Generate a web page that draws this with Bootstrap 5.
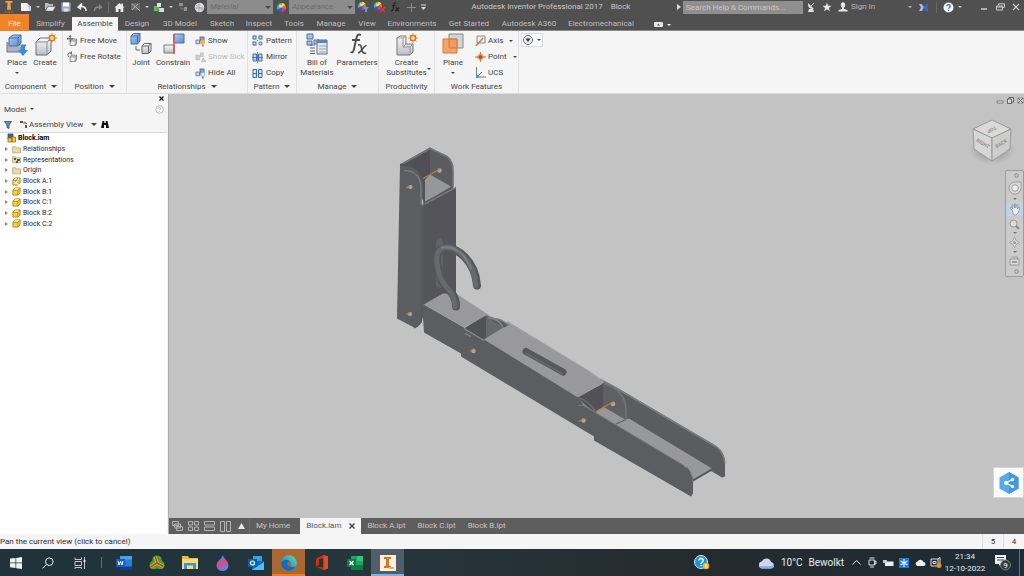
<!DOCTYPE html>
<html lang="en">
<head>
<meta charset="utf-8">
<meta name="viewport" content="width=device-width, initial-scale=1">
<title>Autodesk Inventor Professional 2017 - Block</title>
<link rel="stylesheet" href="https://cdn.jsdelivr.net/npm/bootstrap@5.3.0/dist/css/bootstrap.min.css">
<style>
  body { font: 8px/10px Roboto, "Open Sans", sans-serif; color: #444; background: #f5f5f5; }
  svg { display: block; flex: none; }
  .btn { --bs-btn-padding-x: 0; --bs-btn-padding-y: 0; --bs-btn-font-size: 8px; --bs-btn-line-height: 10px; --bs-btn-border-width: 0; --bs-btn-border-radius: 0; --bs-btn-color: inherit; white-space: nowrap; }
  .caret { display: inline-block; flex: none; border: 2px solid transparent; border-top: 2px solid currentColor; border-bottom: 0; }
  .caret-lg { border-width: 3px; border-top-width: 3px; border-bottom: 0; }
  .vline { width: 1px; height: 11px; background: #6b6b6b; }

  .titlebar { height: 14px; background: #505050; color: #c9c9c9; }
  .qa { width: 16px; height: 14px; display: flex; align-items: center; justify-content: center; flex: none; }
  .qa-narrow { width: 8px; }
  .qa-logo { width: 18px; }
  .qa-sep { width: 5px; }
  .combo { width: 66px; height: 14px; }
  .combo select { appearance: none; border: 0; width: 100%; height: 14px; padding: 0 3px; background: #8c8c8c; color: #6c6c6c; font-style: italic; line-height: 14px; opacity: 1; display: block; }
  .combo .caret { position: absolute; right: 2px; top: 6px; color: #4b4b4b; }
  .search { width: 120px; height: 13px; border: 0; padding: 0 3px; background: #8f8f8f; color: #ddd; }
  .search::placeholder { color: #c8c8c8; opacity: 1; }
  .signin { width: 65px; color: #b8b8b8; }

  .menu-tabs { display: grid; grid-template-columns: 29px 43px 46px 38px 48px 36px 38px 32px 42px 30px 60px 54px 66px 78px 31px; height: 17px; background: #505050; border-bottom: 1px solid #8a8a8a; }
  .menu-tabs .nav-link { padding: 3px 0 0; text-align: center; color: #bebebe; line-height: 14px; white-space: nowrap; }
  .menu-tabs .file { background: #f08227; color: #fff3e4; }
  .menu-tabs .active { background: #f5f5f5; color: #444; margin-top: 3px; padding: 0; }

  .ribbon { height: 63px; border-bottom: 1px solid #dcdcdc; }
  .panel { border-right: 1px solid #e2e2e2; display: flex; flex-direction: column; justify-content: space-between; flex: none; }
  .panel-body { display: flex; padding-top: 1px; }
  .panel-title { text-align: center; height: 12px; line-height: 12px; }
  .panel-title .caret { margin-left: 3px; vertical-align: 1px; }
  .big { display: flex; flex-direction: column; align-items: center; flex: none; }
  .big svg { width: 26px; height: 26px; }
  .rows { display: grid; grid-template-rows: 17px 16px 16px; justify-items: start; }
  .rows .btn { display: flex; align-items: center; gap: 2px; }
  .btn.faded { opacity: 1; color: #bcbcbc; }
  .w63 { width: 63px; } .w64 { width: 64px; } .w121 { width: 121px; } .w49 { width: 49px; } .w82 { width: 82px; } .w56 { width: 56px; } .w84 { width: 84px; }
  .big-28 { width: 28px; } .big-36 { width: 36px; } .big-40 { width: 40px; }
  .round-tool { width: 22px; height: 14px; margin: 2px; background: #fbfbfb; border: 1px solid #dadada; gap: 4px; }

  .browser { width: 169px; background: #f5f5f5; border-right: 1px solid #adadad; }
  .browser-head { height: 38px; }
  .browser-head .head-row { height: 13px; padding: 0 4px; }
  .browser-head .tools { margin-top: 2px; }
  .browser-head .close-row { height: 9px; }
  .tree-box { background: #fff; border-top: 1px solid #d8d8d8; font-size: 7px; color: #26263a; margin-right: 1px; }
  .tree { height: 96px; }
  .tree li { flex: 1 1 0; min-height: 0; display: flex; align-items: center; gap: 2px; padding-left: 5px; }
  .tree .root { padding-left: 7px; }
  .twist { width: 5px; }
  .twist::before { content: ""; display: block; width: 0; border: 2px solid transparent; border-left: 3px solid #8b8b8b; border-right: 0; }

  .canvas { background: #c3c3c3; min-height: 0; }
  .win-ctl { position: absolute; top: 3px; right: 0; gap: 3px; }
  .cube { position: absolute; top: 22px; right: 8px; }
  .navbar-3d { position: absolute; top: 76px; right: 0; width: 19px; height: 107px; background: #cbcbcb; border: 1px solid #9c9c9c; border-radius: 2px; padding: 2px 0; color: #777; }
  .navbar-3d .btn { width: 100%; display: flex; justify-content: center; }
  .navbar-3d .on { background: #bdd2e2; }
  .share { position: absolute; right: 0; bottom: 20px; width: 31px; height: 31px; background: #fbfbfb; border: 1px solid #d6d6d6; }
  .doc-tabs { height: 16px; background: #5e5e5e; color: #c6c6c6; }
  .doc-tabs .nav-link { padding: 0 6px; line-height: 16px; color: #c6c6c6; white-space: nowrap; }
  .doc-tabs .active { background: #f5f5f5; color: #555; }
  .status { height: 15px; color: #2c2c2c; }
  .status .cell { width: 21px; border-left: 1px solid #dedede; line-height: 15px; }

  .taskbar { height: 27px; background: linear-gradient(90deg, #20323a 0%, #25363d 38%, #252b2d 68%, #1d2c36 100%); color: #e9edef; }
  .task { width: 33px; height: 27px; display: flex; align-items: center; justify-content: center; flex: none; }
  .task-sys { width: 32px; }
  .task-sep { width: 11px; }
  .task.hot { background: #ab6731; box-shadow: inset 0 -2px #f47a12; }
  .task.live { background: #4f5e67; box-shadow: inset 0 -2px #78b4e2; }
  .tray { width: 16px; display: flex; justify-content: center; }
  .weather { font-size: 10px; line-height: 14px; width: 90px; gap: 6px; }
  .clock { width: 42px; line-height: 12px; text-align: center; }
</style>
</head>
<body class="vh-100 d-flex flex-column overflow-hidden">

<svg width="0" height="0" class="position-absolute" aria-hidden="true">
  <defs>
    <linearGradient id="steel" x1="0" y1="0" x2="0" y2="1"><stop offset="0" stop-color="#fafafa"/><stop offset="1" stop-color="#b9bfc8"/></linearGradient>
    <linearGradient id="blue" x1="0" y1="0" x2="1" y2="1"><stop offset="0" stop-color="#b4cdf0"/><stop offset="1" stop-color="#5b8bd0"/></linearGradient>
    <linearGradient id="edgeg" x1="0" y1="1" x2="1" y2="0"><stop offset="0" stop-color="#1263b8"/><stop offset=".5" stop-color="#2ba7dc"/><stop offset="1" stop-color="#6bdc7a"/></linearGradient>
    <linearGradient id="drop" x1="0" y1="0" x2=".4" y2="1"><stop offset="0" stop-color="#2bc4f0"/><stop offset=".35" stop-color="#6f74dc"/><stop offset=".6" stop-color="#f0407c"/><stop offset="1" stop-color="#4a8cf0"/></linearGradient>
    <radialGradient id="shade"><stop offset="0" stop-color="#8e8e8e"/><stop offset="1" stop-color="#c3c3c3"/></radialGradient>
    <symbol id="part" viewBox="0 0 10 10"><path d="M1 3.500 3.500 1H9v5.500L6.500 9H1z" fill="#ffd23a" stroke="#a8751a" stroke-width=".9"/><path d="M1.300 3.700h5.200V9M6.500 3.700 9 1.200" fill="none" stroke="#a8751a" stroke-width=".8"/><path d="M2 3 3.800 1.500h4L6.300 3z" fill="#fff0a8"/></symbol>
    <symbol id="folder" viewBox="0 0 10 10"><path d="M.7 8.700V2h3l1 1.200h4.800v5.500z" fill="#ecd9a8" stroke="#b39a62" stroke-width=".8"/></symbol>
    <symbol id="smallcube" viewBox="0 0 12 12"><path d="M3.500 5.500 5.500 4h5v5L9 11H3.500z" fill="#eee" stroke="#666" stroke-width=".8"/><path d="M3.500 5.800H9V11M9 5.800l1.500-1.600" fill="none" stroke="#666" stroke-width=".7"/></symbol>
    <symbol id="rel" viewBox="0 0 12 12"><path d="M1 5h4v4H1z" fill="#cbd9f0" stroke="#4270b8" stroke-width=".8"/><path d="M6 1.500h4v4H6z" fill="#7ca3dc" stroke="#4270b8" stroke-width=".8"/><path d="M5.500 1v8" stroke="#d84040"/></symbol>
    <symbol id="wheel" viewBox="0 0 12 12"><g><path d="M6 6V1a5 5 0 0 1 4.300 2.500z" fill="#ffd23a"/><path d="M6 6l4.300-2.500a5 5 0 0 1 0 5z" fill="#f0692a"/><path d="M6 6l4.300 2.500A5 5 0 0 1 6 11z" fill="#d832a0"/><path d="M6 6v5a5 5 0 0 1-4.300-2.500z" fill="#3c50e0"/><path d="M6 6 1.700 8.500a5 5 0 0 1 0-5z" fill="#2cb5d8"/><path d="M6 6 1.700 3.500A5 5 0 0 1 6 1z" fill="#58c83c"/><circle cx="5" cy="4.500" r="1.800" fill="#fff" opacity=".6"/></g></symbol>
  </defs>
</svg>

<header>
  <div class="titlebar d-flex align-items-center">
    <span class="qa qa-logo"><svg width="12" height="14" viewBox="0 0 12 14"><path d="M2.500 1h7v1.800H7.400l.6 7H4l.6-7H2.500z" fill="#f0a04a"/><path d="M2 11h2v2H2zM5 11h2v2H5zM8 11h2v2H8z" fill="#8f6034"/></svg></span>
    <button class="btn qa" aria-label="New"><svg width="12" height="10"><path d="M1 1h6l3 3v5H1z" fill="#f2f2f2"/><path d="M7 1v3h4v5H9" fill="#c8ced6"/></svg></button>
    <button class="btn qa qa-narrow" aria-label="New options"><i class="caret"></i></button>
    <button class="btn qa" aria-label="Open"><svg width="12" height="10"><path d="M1 8V1h3l1 1h4v2H4z" fill="#b7bcc2"/><path d="M1.500 9 4 4.500h7.500L9 9z" fill="#e5e8ea" stroke="#626a70" stroke-width=".5"/></svg></button>
    <button class="btn qa" aria-label="Save"><svg width="10" height="10"><path d="M.5.500h9v9h-9z" fill="#9aaabd"/><path d="M2 .5h6v4H2z" fill="#fff"/><path d="M2.500 6.500h5v3h-5z" fill="#dce4ec"/></svg></button>
    <button class="btn qa" aria-label="Undo"><svg width="10" height="9"><path d="M1 4.500 4.500 1v2.500C8 3.500 9 5 9 8" fill="none" stroke="#f2f2f2" stroke-width="1.500"/><path d="M0 4.200 4 .5V7z" fill="#f2f2f2"/></svg></button>
    <button class="btn qa" aria-label="Redo"><svg width="10" height="9"><path d="M6 4C2.500 4 1.500 5.500 1.500 8" fill="none" stroke="#8a8a8a" stroke-width="1.300"/><path d="M9.500 4.200 6 1v6z" fill="#8a8a8a"/></svg></button>
    <span class="qa qa-sep"><i class="vline"></i></span>
    <button class="btn qa" aria-label="Home"><svg width="11" height="11"><path d="M.5 5.500 5.500 1l2 1.700V1.500H9V4l1.500 1.500H9.300V10H6.500V7h-2v3H1.700V5.500z" fill="#ececec"/></svg></button>
    <button class="btn qa" aria-label="Select"><svg width="11" height="10"><path d="M1 1h9v7H1z" fill="#6c6c6c"/><path d="M2 2l6 5M8 2 2 8M5 4l5 5" stroke="#a8a8a8"/></svg></button>
    <button class="btn qa qa-narrow" aria-label="Select options"><i class="caret"></i></button>
    <button class="btn qa" aria-label="Update"><svg width="12" height="11"><path d="M1 4h5v5H1z" fill="#79b35d"/><path d="M4 1h4v4H4z" fill="#dfe7ef"/><path d="M6 6h5v4H6z" fill="#d3dbe6"/><path d="M3 5l3 4" stroke="#3bb83b" stroke-width="2"/></svg></button>
    <button class="btn qa qa-narrow" aria-label="Update options"><i class="caret"></i></button>
    <button class="btn qa" aria-label="Links"><svg width="12" height="10"><path d="M2 1h4v3H2zM7 5h3v4H7z" fill="#8f8f8f"/><path d="M4 4v3h3" fill="none" stroke="#777"/></svg></button>
    <button class="btn qa" aria-label="Material browser"><svg width="11" height="11"><circle cx="5.500" cy="5.500" r="4.800" fill="#d9dadb"/><path d="M5 1v9M1 6h9M2 3l7 5" stroke="#a4a8ac"/></svg></button>
    <div class="combo position-relative"><select disabled aria-label="Material"><option>Material</option></select><i class="caret caret-lg"></i></div>
    <button class="btn qa" aria-label="Appearance browser"><svg width="11" height="11"><use href="#wheel"/></svg></button>
    <div class="combo position-relative"><select disabled aria-label="Appearance"><option>Appearance</option></select><i class="caret caret-lg"></i></div>
    <button class="btn qa" aria-label="Adjust"><svg width="13" height="12"><use href="#wheel" width="10" height="10"/><path d="M6 6h6L10 8.500V11H8V8.500z" fill="#4aa6e6"/></svg></button>
    <button class="btn qa" aria-label="Clear"><svg width="13" height="12"><use href="#wheel" width="10" height="10"/><path d="m7 6 5 5m0-5-5 5" stroke="#e0362c" stroke-width="1.500"/></svg></button>
    <button class="btn qa" aria-label="Parameters"><svg width="10" height="10"><path d="M6 1C4.500.5 4 1.500 3.700 3L3 7c-.3 1.500-.8 2-2 1.700M2 3.500h3.500M5.500 5.500c2 0 1.500 3.500 3.500 3.500M9 5.500 5.500 9" fill="none" stroke="#222" stroke-width="1.200"/></svg></button>
    <button class="btn qa" aria-label="Add"><svg width="9" height="9"><path d="M4.500 0v9M0 4.500h9" stroke="#8c8c8c"/></svg></button>
    <button class="btn qa qa-narrow" aria-label="Customize"><svg width="7" height="7"><path d="M1 1h5" stroke="#ddd"/><path d="M1 3h5L3.500 6z" fill="#ddd"/></svg></button>
    <div class="flex-grow-1 d-flex justify-content-center gap-2 text-nowrap"><span>Autodesk Inventor Professional 2017</span><span>Block</span></div>
    <span class="qa qa-narrow"><svg width="4" height="6"><path d="M0 0v6l4-3z" fill="#ddd"/></svg></span>
    <input class="search" type="search" placeholder="Search Help &amp; Commands..." aria-label="Search Help and Commands">
    <button class="btn qa" aria-label="Exchange"><svg width="9" height="10"><path d="M1 2c0 4 2 5 6 5L1 1zM2 7h4l1 3H1z" fill="#e2e2e2"/><path d="m4 4 3-3" stroke="#e2e2e2"/></svg></button>
    <button class="btn qa" aria-label="Favorites"><svg width="10" height="10"><path d="M5 .5 6.200 3.800h3.300L6.900 5.900l1 3.400L5 7.300 2.100 9.300l1-3.400L.5 3.800h3.300z" fill="#e6e6e6"/></svg></button>
    <button class="btn qa" aria-label="Account"><svg width="10" height="10"><ellipse cx="5" cy="3" rx="2.200" ry="2.800" fill="#e6e6e6"/><path d="M4 5h2v2l3.500 1v1.500h-9V8L4 7z" fill="#e6e6e6"/></svg></button>
    <button class="btn signin d-flex align-items-center justify-content-between"><span>Sign In</span><i class="caret me-1"></i></button>
    <button class="btn qa" aria-label="Autodesk Exchange"><svg width="10" height="9"><path d="M0 1h2.500L5 4 3 8H0l2-3.500z" fill="#aebfe6"/><path d="M9.500 1H7.500L4.500 4.500 7 8h2.500L8 4.500z" fill="#4565d4"/></svg></button>
    <span class="qa qa-narrow"><i class="vline"></i></span>
    <button class="btn qa" aria-label="Help"><svg width="11" height="11"><circle cx="5.500" cy="5.500" r="5" fill="#f3f5fa"/><path d="M3.800 4.300c0-2.200 3.500-2.100 3.500 0 0 1.200-1.700 1.200-1.700 2.500M5.500 7.800v1.200" fill="none" stroke="#3c66c4" stroke-width="1.300"/></svg></button>
    <button class="btn qa qa-narrow" aria-label="Help options"><i class="caret"></i></button>
    <div class="d-flex ms-2 ps-1">
      <button class="btn qa" aria-label="Minimize"><svg width="8" height="8"><path d="M1 6h6" stroke="#ccc" stroke-width="1.500"/></svg></button>
      <button class="btn qa" aria-label="Restore"><svg width="9" height="8"><path d="M2.500 2V.8h6v3.500H7M.5 3h6v4h-6zM.5 4h6" fill="none" stroke="#ccc"/></svg></button>
      <button class="btn qa" aria-label="Close"><svg width="8" height="8"><path d="m1 1 6 6m0-6L1 7" stroke="#ccc" stroke-width="1.200"/></svg></button>
    </div>
  </div>

  <nav class="menu-tabs">
    <a href="#" class="nav-link file">File</a><a href="#" class="nav-link">Simplify</a><a href="#" class="nav-link active">Assemble</a><a href="#" class="nav-link">Design</a><a href="#" class="nav-link">3D Model</a><a href="#" class="nav-link">Sketch</a><a href="#" class="nav-link">Inspect</a><a href="#" class="nav-link">Tools</a><a href="#" class="nav-link">Manage</a><a href="#" class="nav-link">View</a><a href="#" class="nav-link">Environments</a><a href="#" class="nav-link">Get Started</a><a href="#" class="nav-link">Autodesk A360</a><a href="#" class="nav-link">Electromechanical</a>
    <button class="btn d-flex align-items-center justify-content-end gap-1 pt-1 text-white" aria-label="Ribbon display"><svg width="9" height="5"><rect width="9" height="5" rx="1" fill="#e8e8e8"/><path d="M3 3.500 4.500 1.500 6 3.500z" fill="#505050"/></svg><i class="caret"></i></button>
  </nav>

  <div class="ribbon d-flex">
    <section class="panel w63">
      <div class="panel-body justify-content-center">
        <button class="btn big big-28"><svg viewBox="0 0 26 26"><path d="M3 18 8 13h14l-4 6H4z" fill="#c9cfd7" stroke="#777f8a"/><path d="M3 10v10h14V15" fill="#aab3bf" stroke="#6d7682"/><path d="m5 6 4-3h8v8l-3 3H5z" fill="url(#blue)" stroke="#4a70a8"/><path d="M5 6h9v8M14 6l3-3" fill="none" stroke="#4a70a8"/><path d="M17 13h4v5h3l-5 6-5-6h3z" fill="#2e8fe8"/></svg><span>Place</span><i class="caret mt-1"></i></button>
        <button class="btn big big-28"><svg viewBox="0 0 26 26"><path d="m4 10 4-4h11v13l-4 4H4z" fill="url(#steel)" stroke="#6b6f75"/><path d="M4 10h11v13M15 10l4-4" fill="none" stroke="#8b8f95"/><path d="M20 1v10M15 6h10M16.500 2.500l7 7M23.500 2.500l-7 7" stroke="#e89050"/><circle cx="20" cy="6" r="2.600" fill="#ffe58a" stroke="#e27020" stroke-width="1.400"/></svg><span>Create</span></button>
      </div>
      <div class="panel-title">Component <i class="caret caret-lg"></i></div>
    </section>
    <section class="panel w64">
      <div class="panel-body rows ps-1">
        <button class="btn"><svg width="11" height="12" viewBox="0 0 12 12"><use href="#smallcube"/><path d="M3.500 0v7M0 3.500h7M2.500 1.300 3.500 0l1 1.300M1.300 2.500 0 3.500l1.300 1" fill="none" stroke="#333" stroke-width=".8"/></svg>Free Move</button>
        <button class="btn"><svg width="11" height="12" viewBox="0 0 12 12"><use href="#smallcube"/><path d="M2 6C-.5 3 2 .5 5 1.500M5 0v3L3 2" fill="none" stroke="#444" stroke-width=".8"/></svg>Free Rotate</button>
      </div>
      <div class="panel-title">Position <i class="caret caret-lg"></i></div>
    </section>
    <section class="panel w121">
      <div class="panel-body">
        <button class="btn big big-28"><svg viewBox="0 0 26 26"><path d="m3 4 2.500-2.500H12V9L9.500 12H3z" fill="url(#blue)" stroke="#4a70a8"/><path d="M3 4h6.500v8M9.500 4 12 1.500" fill="none" stroke="#4a70a8"/><path d="m14 14 2.500-2.500H23V19l-2.500 2.500H14z" fill="url(#steel)" stroke="#666"/><path d="M14 14h6.500v7.500M20.500 14l2.500-2.500M8 14v4h4" fill="none" stroke="#666"/></svg><span>Joint</span></button>
        <button class="btn big big-36"><svg viewBox="0 0 26 26"><path d="M14 2h10v9H14z" fill="url(#blue)" stroke="#4a70a8"/><path d="M4 13h10v8H4z" fill="url(#steel)" stroke="#777"/><path d="M14 2v20" stroke="#e04848" stroke-width="1.500"/></svg><span>Constrain</span></button>
        <div class="rows ps-1">
          <button class="btn"><svg width="11" height="12" viewBox="0 0 12 12"><use href="#rel"/><circle cx="8.500" cy="7.500" r="2.500" fill="#ffb636"/><path d="M7.500 10h2v2h-2z" fill="#7a88a0"/></svg>Show</button>
          <button class="btn faded" disabled><svg width="11" height="12" viewBox="0 0 12 12"><path d="M1 4h4v5H1zM6 1.500h3v4H6zM7 11l2-4 3 4z" fill="#d0d0d0" stroke="#b4b4b4" stroke-width=".7"/></svg>Show Sick</button>
          <button class="btn"><svg width="11" height="12" viewBox="0 0 12 12"><use href="#rel"/><circle cx="8.500" cy="7.500" r="2.300" fill="#dcecff" stroke="#67a2d8" stroke-width=".7"/><path d="M7.500 10h2v2h-2z" fill="#5a88c0"/></svg>Hide All</button>
        </div>
      </div>
      <div class="panel-title">Relationships <i class="caret caret-lg"></i></div>
    </section>
    <section class="panel w49">
      <div class="panel-body rows ps-1">
        <button class="btn"><svg width="12" height="11"><g fill="#d6e4f8" stroke="#3c68b0"><rect x="1" y="1" width="3" height="3"/><rect x="7" y="1" width="3" height="3"/><rect x="1" y="7" width="3" height="3"/><rect x="7" y="7" width="3" height="3" rx="1"/></g><path d="M5 5.500h1" stroke="#3c68b0"/></svg>Pattern</button>
        <button class="btn"><svg width="12" height="11"><path d="M1 2h3.500v7H1zM6.500 2H10v7H6.500z" fill="#b9cff0" stroke="#4a70a8"/><path d="M5.500 0v11M0 5.500h11" stroke="#405880" stroke-width=".7"/></svg>Mirror</button>
        <button class="btn"><svg width="12" height="11"><path d="M1 1.500h3.500v8H1zM6.500 1.500H10v8H6.500zM1 5.500h3.500M6.500 5.500H10" fill="#d6e4f8" stroke="#3c68b0"/></svg>Copy</button>
      </div>
      <div class="panel-title">Pattern <i class="caret caret-lg"></i></div>
    </section>
    <section class="panel w82">
      <div class="panel-body">
        <button class="btn big big-40"><svg viewBox="0 0 26 26"><path d="M3 2h6v5H3zM10 8h5v4h-5zM3 9h5v4H3z" fill="#a9c2e8" stroke="#4a70a8"/><path d="M13 8h10v14H13z" fill="#e6ebf2" stroke="#5a6d8c"/><path d="M13 8h10v3H13z" fill="#5e82ba"/><path d="M15 14h7M15 17h7M15 20h7" stroke="#8f9db4"/><path d="M6 13h5M6 16h5M6 19h5M6 21.500h5" stroke="#5c6470"/></svg><span>Bill of<br>Materials</span></button>
        <button class="btn big big-40"><svg viewBox="0 0 26 26"><path d="M17 3c-3-1.500-4 0-4.800 4L10 17c-.6 3-1.500 4-3.500 3M8 8h8" fill="none" stroke="#4c4c4c" stroke-width="1.900"/><path d="M14 13c3-1 3 1 3.700 4s1.300 5 4.300 4M22.500 13.500c-3 0-5 7-8.500 7.500" fill="none" stroke="#4c4c4c" stroke-width="1.600"/></svg><span>Parameters</span></button>
      </div>
      <div class="panel-title">Manage <i class="caret caret-lg"></i></div>
    </section>
    <section class="panel w56">
      <div class="panel-body justify-content-center ps-1">
        <button class="btn big big-40"><svg viewBox="0 0 26 26"><path d="m3 6 3-2h6v8h7v8l-3 3H3z" fill="url(#steel)" stroke="#777"/><path d="M3 6h6v9h7v8M9 6l3-2M9 15l3-3M16 15l3-3" fill="none" stroke="#999"/><path d="M19 1v10M14 6h10M15.500 2.500l7 7M22.500 2.500l-7 7" stroke="#e89050"/><circle cx="19" cy="6" r="2.600" fill="#ffe58a" stroke="#e27020" stroke-width="1.400"/></svg><span>Create<br>Substitutes</span></button>
        <i class="caret align-self-end mb-2"></i>
      </div>
      <div class="panel-title">Productivity</div>
    </section>
    <section class="panel w84">
      <div class="panel-body">
        <button class="btn big big-36"><svg viewBox="0 0 26 26"><path d="M9 2h14v14H9z" fill="#d0d3d8" stroke="#888"/><path d="M3 7h14v14H3z" fill="#f6a468" stroke="#d8763a"/><path d="M9 7h8v9H9z" fill="#f09a60" stroke="#d8763a"/></svg><span>Plane</span><i class="caret mt-1"></i></button>
        <div class="rows ps-1">
          <button class="btn"><svg width="11" height="12"><path d="M2 1h8v7H2z" fill="#eee" stroke="#888"/><path d="M1 11 8 3" stroke="#d4763c" stroke-width="1.300"/></svg>Axis <i class="caret ms-1"></i></button>
          <button class="btn"><svg width="11" height="12"><path d="M5.500 1.500 10 6l-4.500 4.500L1 6z" fill="#eaa477"/><path d="M5.500 1v10M0 6h11" stroke="#d08050"/><circle cx="5.500" cy="6" r="1.800" fill="#a75428"/></svg>Point <i class="caret ms-1"></i></button>
          <button class="btn"><svg width="11" height="12"><path d="M1.500 0v10H11M2 10l5-5" fill="none" stroke="#777"/><path d="M1 8h3v3H1z" fill="#3f94e0"/></svg>UCS</button>
        </div>
      </div>
      <div class="panel-title">Work Features</div>
    </section>
    <button class="btn round-tool d-flex align-items-center justify-content-center" aria-label="Select filter"><svg width="10" height="10"><circle cx="5" cy="5" r="4.500" fill="#e7eaee" stroke="#6f7680"/><path d="M2.500 3.500h5L5 7z" fill="#333"/></svg><i class="caret"></i></button>
  </div>
</header>

<main class="d-flex flex-grow-1 overflow-hidden">
  <aside class="browser d-flex flex-column flex-shrink-0">
    <div class="browser-head">
      <div class="close-row d-flex justify-content-end align-items-center"><button class="btn me-1" aria-label="Close panel"><svg width="5" height="5"><path d="m.5.500 4 4m0-4-4 4" stroke="#111" stroke-width="1.200"/></svg></button></div>
      <div class="head-row d-flex justify-content-between align-items-center"><button class="btn">Model<i class="caret ms-1 align-middle"></i></button><button class="btn" aria-label="Browser help"><svg width="9" height="9"><circle cx="4.500" cy="4.500" r="3.800" fill="#fafafa" stroke="#aaa" stroke-width=".8"/><path d="M3.300 3.500c0-1.700 2.400-1.600 2.400 0 0 .8-1.200.9-1.200 1.800M4.500 6.200v.8" fill="none" stroke="#aaa" stroke-width=".8"/></svg></button></div>
      <div class="head-row tools d-flex align-items-center">
        <svg width="8" height="8"><path d="M.5.500h7L5 4v3.500L3 6.500V4z" fill="#6690b8" stroke="#2f4b66" stroke-width=".8"/></svg>
        <svg width="9" height="9" class="ms-2"><path d="M0 1h3v2H0zM5 5h2v3H5z" fill="#555"/><path d="M3 3h3M4 2l3 2" stroke="#c84848"/></svg>
        <button class="btn d-flex align-items-center gap-2">Assembly View<i class="caret caret-lg"></i></button>
        <svg width="8" height="7" class="ms-1"><path d="M1.500 0h1.800v2h1.400V0h1.800L8 7H5V4H3v3H0z" fill="#111"/></svg>
      </div>
    </div>
    <div class="tree-box flex-grow-1">
      <ul class="tree list-unstyled d-flex flex-column mb-0">
        <li class="root fw-bold text-black"><svg width="9" height="10"><path d="M1 1h5v5H1z" fill="#3f6a9e" stroke="#1e3a60" stroke-width=".7"/><path d="M1 5h4v4H1zM5 4h3.500v5H5z" fill="#ffc832" stroke="#8b6010" stroke-width=".7"/></svg>Block.iam</li>
        <li><i class="twist"></i><svg width="9" height="9"><use href="#folder"/></svg>Relationships</li>
        <li><i class="twist"></i><svg width="9" height="9"><use href="#folder"/><path d="M2 3h2v2H2zM5 4h3v2H5zM4 6h2v2H4z" fill="#4a5a6a"/></svg>Representations</li>
        <li><i class="twist"></i><svg width="9" height="9"><use href="#folder"/></svg>Origin</li>
        <li><i class="twist"></i><svg width="9" height="9"><use href="#part"/><path d="M2 4 7 8M7 1 3 7" stroke="#f4f4f4" stroke-width="1.300"/><path d="M6 1 3 5" stroke="#666" stroke-width=".8"/></svg>Block A:1</li>
        <li><i class="twist"></i><svg width="9" height="9"><use href="#part"/></svg>Block B:1</li>
        <li><i class="twist"></i><svg width="9" height="9"><use href="#part"/></svg>Block C:1</li>
        <li><i class="twist"></i><svg width="9" height="9"><use href="#part"/></svg>Block B:2</li>
        <li><i class="twist"></i><svg width="9" height="9"><use href="#part"/></svg>Block C:2</li>
      </ul>
    </div>
  </aside>

  <div class="d-flex flex-column flex-grow-1 overflow-hidden">
    <div class="canvas position-relative flex-grow-1">
      <svg class="w-100 h-100" viewBox="169 94 855 423" role="img" aria-label="Hinged block assembly">
        <!-- far wall of the end channel -->
        <path d="M600 378 615 386 717 446Q725 452 725 463V476L722 477 626 420 603 384z" fill="#5b5c60"/>
        <path d="M600 379 615 387 716 446Q724 452 725 463" fill="none" stroke="#7d7e82" stroke-width="1.500"/>
        <!-- channel floor -->
        <path d="M594 412 605 406 625 419 629 418 712 468 693 480 680 466z" fill="#98989c"/>
        <path d="m712 469-19 11" stroke="#505156" stroke-width="2"/>
        <path d="m615 424 11-5" stroke="#55565a"/>
        <!-- second hinge pocket -->
        <path d="M603 383Q626 390 626 408L625 419 603 406z" fill="#5f6064"/>
        <path d="M604 383Q626 390 626 410V418" fill="none" stroke="#737478" stroke-width="1.500"/>
        <path d="M577 397 603 383V407L594 413z" fill="#525157"/>
        <!-- middle block, top face -->
        <path d="M483 339 508 321 588 370 604 382 578 397z" fill="#98989d"/>
        <path d="m507 321 81 49 16 11" fill="none" stroke="#a3a3a7"/>
        <path d="m526 351 37 20.500" stroke="#57585c" stroke-width="7" stroke-linecap="round"/>
        <path d="m526 353 36 20" stroke="#66676b" stroke-width="2" stroke-linecap="round"/>
        <!-- first hinge pocket -->
        <path d="M464 328 486 314 508 324 484 339z" fill="#67686c"/>
        <path d="M464 328 486 315V337L482 339z" fill="#525157"/>
        <path d="M492 318Q500 317 508 325L504 327 492 320z" fill="#5a5b5f"/>
        <path d="M488 317Q498 318 503 326" fill="none" stroke="#85868a" stroke-width="1.500"/>
        <path d="M492 318Q500 317 509 325" fill="none" stroke="#7b7c80" stroke-width="1.500"/>
        <!-- near side of the arm -->
        <path d="M422 303 464 327 484 339 578 397 585 406 682 464Q693 471 693 481V493L691 496 594 440V436L461 356V353L424 332z" fill="#5c5d61"/>
        <path d="m585 406 97 58Q693 471 693 482" fill="none" stroke="#737478"/>
        <path d="M578 397Q590 401 596 412" fill="none" stroke="#66676b" stroke-width="2"/>
        <path d="M578 405Q587 403 594 412" fill="none" stroke="#7c7d81"/>
        <path d="m687 467 3 5" stroke="#55565a"/>
        <path d="m464 328 20 12M465 333l6 3" stroke="#87888c" stroke-width="1.200"/>
        <!-- base block, top face -->
        <path d="M424 304 443 293H456L488 314 464 327z" fill="#98989d"/>
        <!-- upright block -->
        <path d="M400 164 430 147 447 156Q453 161 453 170V188L425 203z" fill="#5b5c60"/>
        <path d="M403 165 430 149V175L422 181z" fill="#504f56"/>
        <path d="M430 174 451 186 425 202V179z" fill="#97979b"/>
        <path d="M401 164 430 148 447 156Q453 161 453 170V187" fill="none" stroke="#747579" stroke-width="1.700"/>
        <path d="M421 205 456 187V294L443 293 424 304H421z" fill="#55545b"/>
        <path d="m422 205 34-18" stroke="#7c7c81" stroke-width="1.400"/>
        <path d="m424 202 29-15" stroke="#55565a"/>
        <path d="M400 164 408 164Q422 169 422 184V322L414 327 397 318z" fill="#5c5d61"/>
        <path d="M404 170Q420 170 421 187V204" fill="none" stroke="#77787c" stroke-width="1.500"/>
        <path d="M400 164Q424 165 424 184V204" fill="none" stroke="#4f5054" stroke-width="1.500"/>
        <path d="M422 206V316Q421 325 414 327" fill="none" stroke="#58595d" stroke-width="2"/>
        <!-- hook -->
        <path d="M436 241Q440 233 443 241V287H436z" fill="#616268"/>
        <g fill="none" stroke-linecap="round">
          <path d="M477 285C475 260 457 246 444 248 432 251 438 267 441 277 444 289 456 290 456 306" stroke="#55565a" stroke-width="8"/>
          <path d="M476 285C474 260 456 245 444 247 433 250 437 266 440 276 444 288 455 290 455 306" stroke="#68696d" stroke-width="5"/>
          <path d="M471 268C464 252 454 245 442 247" stroke="#7d7e82" stroke-width="2"/>
        </g>
        <!-- pins and axes -->
        <g fill="#aaaaad"><circle cx="410.500" cy="186.500" r="2"/><circle cx="410" cy="313.500" r="2"/><circle cx="439.500" cy="170" r="2.200"/><circle cx="473.500" cy="350.500" r="2.200"/><circle cx="583.500" cy="420" r="2.200"/><circle cx="613" cy="403.500" r="2.200"/></g>
        <path d="m423 178 18-10M406 188l4-3M406 314l4-2M470 351l4-3M579 421l5-3M596 411l18-10" stroke="#c97c2e" stroke-width="1.200"/>
      </svg>
      <div class="win-ctl d-flex">
        <button class="btn" aria-label="Minimize view"><svg width="8" height="7"><path d="M1 4h6v2H1z" fill="#eee" stroke="#666" stroke-width=".8"/></svg></button>
        <button class="btn" aria-label="Restore view"><svg width="7" height="7"><path d="M2 2V.5h4.500V5H5M.5 2h4v4.500h-4z" fill="#ddd" stroke="#555" stroke-width=".9"/></svg></button>
        <button class="btn" aria-label="Close view"><svg width="7" height="7"><path d="M1 1h5v5H1z" fill="#eee" stroke="#777" stroke-width=".7"/><path d="m1 1 5 5m0-5L1 6" stroke="#555"/></svg></button>
      </div>
      <svg class="cube" width="48" height="50" viewBox="0 0 48 50"><ellipse cx="24" cy="35" rx="23" ry="13" fill="url(#shade)"/><g stroke="#9a9a9a"><path d="M24 4 43 13 24 22 5 13z" fill="#dadada"/><path d="M5 13 24 22V45L6 33z" fill="#d6d6d6"/><path d="M43 13 24 22V45L42 33z" fill="#cdcdcd"/></g><g font-size="5" font-weight="bold" fill="#909090" text-anchor="middle"><text transform="translate(14 29) rotate(30)">RIGHT</text><text transform="translate(34 29) rotate(-30)">BACK</text><text transform="translate(23 12) rotate(152)">TOP</text></g></svg>
      <div class="navbar-3d d-flex flex-column justify-content-between align-items-center">
        <button class="btn justify-content-end pe-1" aria-label="Close navigation bar"><svg width="5" height="5"><circle cx="2.500" cy="2.500" r="1.800" fill="none" stroke="#888"/></svg></button>
        <button class="btn" aria-label="Wheel"><svg width="14" height="14"><path d="M7 1a6 6 0 1 0 6 6V1z" fill="#ddd" stroke="#999"/><circle cx="7" cy="7" r="3.300" fill="#eee" stroke="#999"/></svg></button>
        <i class="caret"></i>
        <button class="btn on" aria-label="Pan"><svg width="12" height="13"><path d="M3 7 1 5l1-1 2 2-1-4 1-.5L5.500 5V1h1.200v4L8 1.500l1 .3L8.500 6 10 4l1 .8L9 10l-2 2H5z" fill="#eee" stroke="#8594a0" stroke-width=".8"/></svg></button>
        <button class="btn" aria-label="Zoom"><svg width="11" height="11"><circle cx="4.500" cy="4.500" r="3.500" fill="#ddd" stroke="#999"/><path d="m7 7 3 3" stroke="#888" stroke-width="2"/></svg></button>
        <i class="caret"></i>
        <button class="btn" aria-label="Orbit"><svg width="11" height="11"><path d="M5.500 0 7 3.500 10.500 5.500 7 7.500 5.500 11 4 7.500.5 5.500 4 3.500z" fill="#ddd" stroke="#999" stroke-width=".8"/><circle cx="5.500" cy="5.500" r="1.500" fill="#999"/></svg></button>
        <i class="caret"></i>
        <button class="btn" aria-label="Look at"><svg width="11" height="10"><path d="M1 3h9v6H1zM2.500 1h6v2" fill="#ddd" stroke="#999"/><path d="M3 5h5v2H3z" fill="#999"/></svg></button>
        <button class="btn justify-content-end pe-1" aria-label="Customize navigation bar"><svg width="5" height="5"><circle cx="2.500" cy="2.500" r="1.800" fill="none" stroke="#888"/></svg></button>
      </div>
      <button class="btn share d-flex align-items-center justify-content-center" aria-label="Share"><svg width="20" height="22"><path d="M10 0 19.500 5.500v11L10 22 .5 16.500v-11z" fill="#56a8ec"/><path d="M10 0 19.500 5.500v11L10 22z" fill="#4496e0"/><path d="M13.500 7.500 7 11l6.500 3.500" fill="none" stroke="#fff" stroke-width="1.200"/><g fill="#fff"><circle cx="13.500" cy="7.500" r="1.700"/><circle cx="7" cy="11" r="2.100"/><circle cx="13.500" cy="14.500" r="1.700"/></g></svg></button>
    </div>
    <nav class="doc-tabs d-flex flex-shrink-0 align-items-center">
      <button class="btn qa" aria-label="Cascade"><svg width="11" height="10"><path d="M.5.500h6v4h-6zM2.500 3h6v4h-6zM4.500 5.500h6v4h-6z" fill="#5e5e5e" stroke="#b4b4b4"/></svg></button>
      <button class="btn qa" aria-label="Tile"><svg width="11" height="10"><path d="M.5.500h4v3.500h-4zM6.500.500h4v3.500h-4zM.5 6h4v3.500h-4zM6.500 6h4v3.500h-4z" fill="none" stroke="#b4b4b4"/></svg></button>
      <button class="btn qa" aria-label="Tile horizontally"><svg width="11" height="10"><path d="M.5.500h10v3.500H.5zM.5 6h10v3.500H.5z" fill="none" stroke="#b4b4b4"/></svg></button>
      <button class="btn qa" aria-label="Tile vertically"><svg width="11" height="11"><path d="M.5.500h4v10h-4zM6.500.500h4v10h-4z" fill="none" stroke="#b4b4b4"/></svg></button>
      <button class="btn qa" aria-label="Documents"><svg width="7" height="6"><path d="M3.500 0 7 6H0z" fill="#e8e8e8"/></svg></button>
      <i class="vline h-100"></i>
      <a href="#" class="nav-link">My Home</a>
      <a href="#" class="nav-link active d-flex align-items-center ms-1">Block.iam<svg class="ms-2" width="6" height="6"><path d="m.5.500 5 5m0-5-5 5" stroke="#444" stroke-width="1.400"/></svg></a>
      <a href="#" class="nav-link">Block A.ipt</a><a href="#" class="nav-link">Block C.ipt</a><a href="#" class="nav-link">Block B.ipt</a>
    </nav>
  </div>
</main>

<div class="status d-flex flex-shrink-0 align-items-center justify-content-between"><span>Pan the current view (click to cancel)</span><div class="d-flex"><span class="cell text-center">5</span><span class="cell text-center">4</span></div></div>

<footer class="taskbar d-flex align-items-center flex-shrink-0">
  <button class="btn task task-sys" aria-label="Start"><svg width="12" height="12"><path d="M0 1.500 5.500 1v4.600H0zM6.200.9 12 0v5.600H6.200zM0 6.300h5.500V11L0 10.300zM6.200 6.300H12V12l-5.800-.8z" fill="#f2f2f2"/></svg></button>
  <button class="btn task task-sys" aria-label="Search"><svg width="12" height="12"><circle cx="7.300" cy="4.700" r="3.800" fill="none" stroke="#eee"/><path d="M4.500 7.500.7 11.300" stroke="#eee"/></svg></button>
  <button class="btn task task-sys" aria-label="Task view"><svg width="12" height="12"><path d="M1 .5v2h6.500v-2M1 4.500h6.500v4H1zM1 12v-1.500h6.500V12M10.500 0v12" fill="none" stroke="#c4c8ca"/><path d="M9.500 3h2v2h-2z" fill="#ddd"/></svg></button>
  <span class="qa task-sep"><i class="vline"></i></span>
  <button class="btn task" aria-label="Word"><svg width="16" height="14"><path d="M4 0h12v14H4z" fill="#2b7cd3"/><path d="M4 0h12v3.500H4z" fill="#41a5ee"/><path d="M4 10.500h12V14H4z" fill="#103f91"/><path d="M0 3h9v8H0z" fill="#185abd"/><path d="m2 5 1 4L4.500 5.500 6 9l1-4" fill="none" stroke="#fff"/></svg></button>
  <button class="btn task" aria-label="Route planner"><svg width="16" height="16"><path d="M8 .5c4 0 5 3 4.500 5 2 1 3.500 3 3 6-1 3-4 3-7.500 2C4.500 15 1 14.500.5 11c0-2.500 1-4.500 3-5.500C3 3 4.500.5 8 .5z" fill="#4aa12e"/><path d="m8 8-1.500-6M8 8l6.500 3.500M8 8 1.500 12" stroke="#e9c63a" stroke-width="3"/><path d="m8 8-1.500-6M8 8l6.500 3.500M8 8 1.500 12" stroke="#c63b20" stroke-width="1.500"/></svg></button>
  <button class="btn task" aria-label="File Explorer"><svg width="16" height="13"><path d="M0 0h6l1 2h9v11H0z" fill="#f5b93a"/><path d="M0 3h16v10H0z" fill="#ffdc72"/><path d="M2 13V7h12v6h-3V9.500H5V13z" fill="#3c92e0"/></svg></button>
  <button class="btn task" aria-label="Paint 3D"><svg width="13" height="16"><path d="M7 0c1 4 5.500 6 5.500 10.500A6 5.500 0 0 1 .5 10.500C.5 6 6 4 7 0z" fill="url(#drop)"/></svg></button>
  <button class="btn task" aria-label="Outlook"><svg width="16" height="14"><path d="M5 0h9v6H5z" fill="#28a8ea"/><path d="M4 5h12v9H4z" fill="#0f6cbd"/><path d="M4 14 16 6v8z" fill="#50c0f0"/><path d="M0 3h9v8H0z" fill="#0f5fb0"/><circle cx="4.500" cy="7" r="2" fill="none" stroke="#fff" stroke-width="1.200"/></svg></button>
  <button class="btn task hot" aria-label="Edge"><svg width="16" height="16"><circle cx="8" cy="8" r="7.800" fill="url(#edgeg)"/><path d="M.5 9C1 4 8 3.500 9.500 7.500 10 9 8.500 9.500 9 10.500c1 2 4 1.500 5.700.5-1.700 4-6 5.500-9 4.200C2 14 .5 11.500.5 9z" fill="#1668b8"/><path d="M8 6.500c2 0 2.500 1.500 1.500 2.500-.5 1-.3 1.800.7 2.300C8 12 6 10.500 6 8.800 6 7.500 7 6.500 8 6.500z" fill="#ab6731"/></svg></button>
  <button class="btn task" aria-label="Office"><svg width="12" height="15"><path d="M0 3.500 7.500 0 12 1.500v12L7.500 15 0 11.800l7.500.7V3L3 4.200V10L0 11.500z" fill="#c8320e"/><path d="M7.500 0 12 1.500v12L7.500 15z" fill="#ea4a20"/></svg></button>
  <button class="btn task" aria-label="Excel"><svg width="16" height="14"><path d="M4 0h12v14H4z" fill="#21a366"/><path d="M10 0h6v5h-6z" fill="#33c481"/><path d="M4 9h12v5H4z" fill="#107c41"/><path d="M0 3h9v8H0z" fill="#107c41"/><path d="m2.500 5 4 4m0-4-4 4" stroke="#fff" stroke-width="1.200"/></svg></button>
  <button class="btn task live" aria-label="Inventor"><svg width="16" height="16"><path d="M0 0h16v16H0z" fill="#fdeedd"/><path d="M4 2h7v2H9v7h2v2H4v-2h2V4H4z" fill="#c8792c"/><path d="M9 12h5v2H9z" fill="#e8b070"/></svg></button>

  <button class="btn task ms-auto me-3" aria-label="Get help"><svg width="16" height="15"><circle cx="7" cy="7" r="6.500" fill="#1d94d4" stroke="#d6ecf8"/><path d="M5 5.500c0-2.800 4.200-2.700 4.200 0C9.200 7 7 7 7 9M7 10v1.300" fill="none" stroke="#fff" stroke-width="1.400"/><circle cx="12" cy="11" r="3.300" fill="#f5b52e"/><path d="M12 9v4" stroke="#fff"/></svg></button>
  <button class="btn weather d-flex align-items-center ms-4"><svg width="17" height="12"><path d="M4 11.500a3.700 3.700 0 0 1 0-7.300 4.800 4.800 0 0 1 9 .8 3.300 3.300 0 0 1 0 6.500z" fill="#c6d8f6"/><path d="M1 9h15c-.5 1.800-1.500 2.500-3 2.500H4C2.500 11.500 1.300 10.500 1 9z" fill="#8eaee8"/></svg><span>10°C</span><span>Bewolkt</span></button>
  <button class="btn tray" aria-label="Hidden icons"><svg width="9" height="5"><path d="m.5 4.500 4-4 4 4" fill="none" stroke="#eee"/></svg></button>
  <button class="btn tray" aria-label="Meet now"><svg width="9" height="11"><path d="M1.500 1h5M1 3h5.500v5H1zM6.500 4.500 8 4v3l-1.500-.5M2 10h4" fill="none" stroke="#ddd"/></svg></button>
  <button class="btn tray" aria-label="Battery"><svg width="11" height="8"><path d="M2 2.500h8.500V7H2z" fill="#eee"/><path d="M0 1h4v3H0z" fill="#ccc"/></svg></button>
  <button class="btn tray" aria-label="Snowflake"><svg width="10" height="10"><path d="M0 0h10v10H0z" fill="#1f78dc"/><path d="M5 1v8M1.500 3l7 4M8.500 3l-7 4" stroke="#e6f4ff" stroke-width="1.200"/></svg></button>
  <button class="btn tray" aria-label="OneDrive"><svg width="11" height="7"><path d="M2.500 7a2.300 2.300 0 0 1 0-4.500A3.300 3.300 0 0 1 8.500 3a2 2 0 0 1 0 4z" fill="#eee"/></svg></button>
  <button class="btn tray" aria-label="Update status"><svg width="12" height="11"><path d="M1 2h7v7H1zM8 2l2-1.500v7M3 4.500h3v2H3z" fill="none" stroke="#ddd"/><circle cx="9" cy="8.500" r="2.500" fill="#f58a1c"/></svg></button>
  <div class="clock">21:34<br>12-10-2022</div>
  <button class="btn task" aria-label="Notifications"><svg width="16" height="17"><path d="M0 1h11v9H6L4 12v-2H0z" fill="#f0f0f0"/><path d="M2 3.500h7M2 6h7" stroke="#39454c"/><circle cx="10.500" cy="11" r="5" fill="#333b40" stroke="#999" stroke-width=".7"/><text x="10.500" y="14" font-size="8" text-anchor="middle" fill="#fff">9</text></svg></button>
  <i class="vline h-100 me-1"></i>
</footer>

<script src="https://cdn.jsdelivr.net/npm/bootstrap@5.3.0/dist/js/bootstrap.bundle.min.js"></script>
</body>
</html>
